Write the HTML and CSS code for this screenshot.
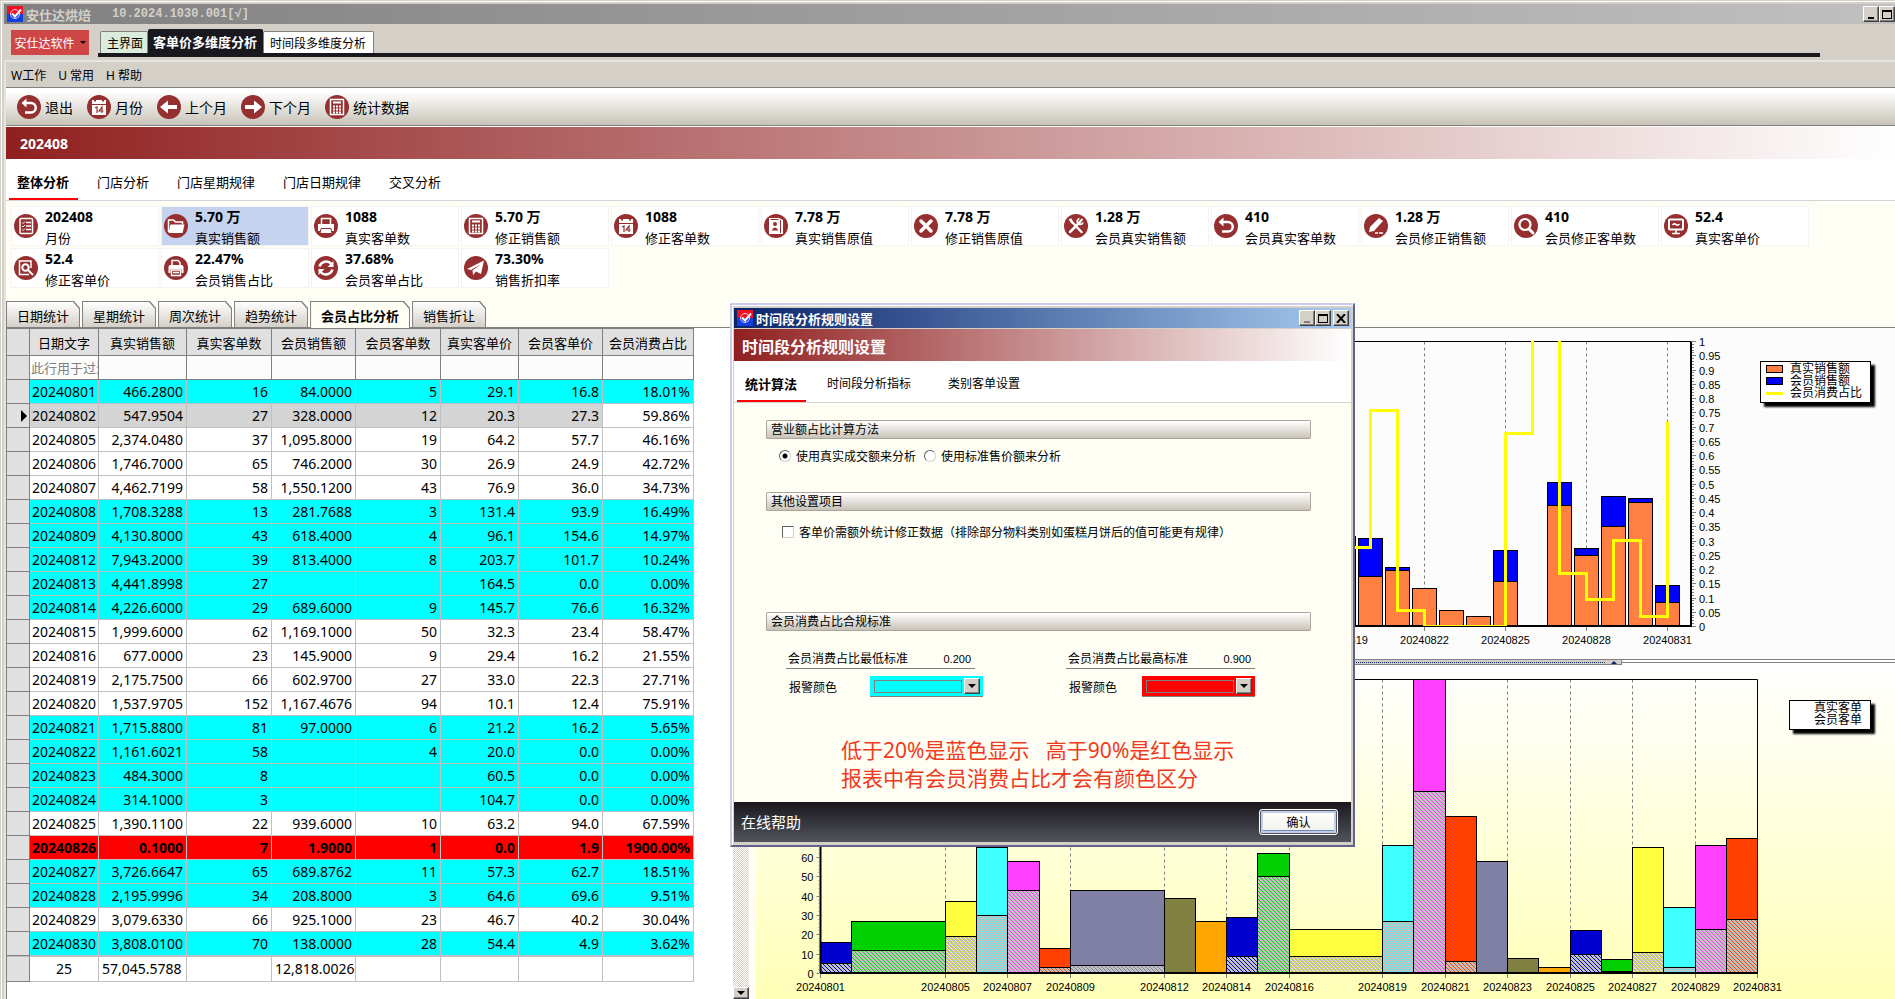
FILE: index.html
```html
<!DOCTYPE html>
<html lang="zh-CN">

<head>
    <meta charset="UTF-8">
    <meta name="viewport" content="width=device-width, initial-scale=1.0">
    <title>安仕达烘焙</title>
    <link rel="stylesheet" href="styles.css">
</head>

<body>
    <!-- icon set -->
    <svg class="defs" width="0" height="0" aria-hidden="true">
        <symbol id="i-logo" viewBox="0 0 16 16">
            <rect width="16" height="8" fill="#f01020" />
            <rect y="8" width="16" height="8" fill="#1040e0" />
            <path d="M0 9 Q4 6 8 9 T16 8 V11 H0z" fill="#1040e0" />
            <circle cx="8" cy="8" r="4.5" fill="none" stroke="#e8c8e8" />
            <path d="M5 7.500l3 3 6-7" fill="none" stroke="#fff" stroke-width="2" />
        </symbol>
        <symbol id="i-undo" viewBox="0 0 24 24">
            <path d="M8 8h6a4.500 4.500 0 0 1 0 9.500H8" fill="none" stroke="#fff" stroke-width="2.500" />
            <path d="M4.500 8l5-4.500v9z" fill="#fff" />
        </symbol>
        <symbol id="i-calendar" viewBox="0 0 24 24">
            <path d="M5 5h14v4H5z M5 10h14v10H5z" fill="#fff" />
            <path d="M8 3.500v3M16 3.500v3" stroke="#962f30" stroke-width="2" />
            <path d="M8 13l2-1v6M15 18v-6l-3 4h4.500" fill="none" stroke="#962f30" stroke-width="1.200" />
        </symbol>
        <symbol id="i-left" viewBox="0 0 24 24">
            <path d="M3 12l8-6.500v4.500h9v4h-9v4.500z" fill="#fff" />
        </symbol>
        <symbol id="i-right" viewBox="0 0 24 24">
            <path d="M21 12l-8-6.500v4.500H4v4h9v4.500z" fill="#fff" />
        </symbol>
        <symbol id="i-calc" viewBox="0 0 24 24">
            <rect x="5.500" y="4.500" width="13" height="15" fill="none" stroke="#fff" stroke-width="1.500" />
            <path d="M8 7.500h8" stroke="#fff" stroke-width="2" />
            <path d="M8 11.500h8M8 14.500h8M8 17.500h8" stroke="#fff" stroke-width="2" stroke-dasharray="2 1" />
        </symbol>
        <symbol id="i-list" viewBox="0 0 24 24">
            <rect x="6" y="4.500" width="12.500" height="15" rx="1" fill="none" stroke="#fff" stroke-width="1.500" />
            <path d="M12 8.500h5M12 12h5M12 15.500h5" stroke="#fff" stroke-width="1.500" />
            <path d="M8 8.500l1 1 2-2M8 12l1 1 2-2M8 15.500l1 1 2-2" fill="none" stroke="#fff" />
        </symbol>
        <symbol id="i-folder" viewBox="0 0 24 24">
            <path d="M4.500 18V6h5l2 2h7v2.500" fill="none" stroke="#fff" stroke-width="1.500" />
            <path d="M6.500 10.500h14l-2 8.500h-14z" fill="#fff" />
        </symbol>
        <symbol id="i-print" viewBox="0 0 24 24">
            <path d="M7.500 10V4.500h9V10" fill="none" stroke="#fff" stroke-width="1.500" />
            <path d="M4 10h16v7H4z" fill="#fff" />
            <path d="M7 14.500h10l1 5H6z" fill="#fff" stroke="#962f30" />
        </symbol>
        <symbol id="i-contact" viewBox="0 0 24 24">
            <path d="M5 4h10l4 2v14H5z" fill="#fff" />
            <path d="M16.500 6v13M6.500 5.500h8" stroke="#962f30" />
            <circle cx="11" cy="10" r="2" fill="#962f30" />
            <path d="M7.500 16.500q3.500-6 7 0z" fill="#962f30" />
        </symbol>
        <symbol id="i-close" viewBox="0 0 24 24">
            <path d="M7 7l10 10M17 7L7 17" stroke="#fff" stroke-width="3.500" stroke-linecap="round" />
        </symbol>
        <symbol id="i-tools" viewBox="0 0 24 24">
            <path d="M7 7l10.500 11M6 18L16 8" stroke="#fff" stroke-width="2.500" stroke-linecap="round" />
            <path d="M4.500 5l3-.500 2 4-2 1z" fill="#fff" />
            <path d="M18.500 5l-3 3M19 8.500a3 3 0 1 1-3.500-4" fill="none" stroke="#fff" stroke-width="1.800" />
        </symbol>
        <symbol id="i-pencil" viewBox="0 0 24 24">
            <path d="M5 18l1-5 9-9 4 3-9 10z" fill="#fff" />
            <path d="M11 19h3M15 19h4" stroke="#fff" stroke-width="1.500" />
        </symbol>
        <symbol id="i-search" viewBox="0 0 24 24">
            <circle cx="11" cy="10.500" r="5.500" fill="none" stroke="#fff" stroke-width="2.200" />
            <path d="M15 15l4 4" stroke="#fff" stroke-width="3" stroke-linecap="round" />
        </symbol>
        <symbol id="i-monitor" viewBox="0 0 24 24">
            <rect x="5" y="5.500" width="14" height="10" rx="1" fill="none" stroke="#fff" stroke-width="2" />
            <path d="M8.500 11q2-2 3.500-.500t3.500-.500M12 16v3M8 19.500h8" fill="none" stroke="#fff" stroke-width="1.600" />
        </symbol>
        <symbol id="i-docsearch" viewBox="0 0 24 24">
            <path d="M17 12V5H5.500v13.500H15" fill="none" stroke="#fff" stroke-width="1.500" />
            <circle cx="11.500" cy="11.500" r="3.200" fill="none" stroke="#fff" stroke-width="2" />
            <path d="M14 14l5 5" stroke="#fff" stroke-width="2" />
        </symbol>
        <symbol id="i-print2" viewBox="0 0 24 24">
            <path d="M8 9V4.500h6l2 2V9" fill="none" stroke="#fff" stroke-width="1.500" />
            <path d="M4.500 17V11q0-2 2-2h11q2 0 2 2v6h-2v-4h-11v4z" fill="#fff" />
            <path d="M7.500 14h9v5.500h-9zM9 16.500h6" fill="none" stroke="#fff" stroke-width="1.400" />
        </symbol>
        <symbol id="i-refresh" viewBox="0 0 24 24">
            <path d="M5.500 10.500a7 7 0 0 1 12-2.500M18.500 13.500a7 7 0 0 1-12 2.500" fill="none" stroke="#fff" stroke-width="2.500" />
            <path d="M19.500 5v6h-6zM4.500 19v-6h6z" fill="#fff" />
        </symbol>
        <symbol id="i-plane" viewBox="0 0 24 24">
            <path d="M3 13L20 4.500 17 18l-5-2.500-3 3.500-.500-4.500L17 8 7 14z" fill="#fff" />
        </symbol>
    </svg>

    <div class="app">
        <header class="titlebar">
            <svg class="logo"><use href="#i-logo" /></svg>
            <span class="app-name">安仕达烘焙</span>
            <span class="version">10.2024.1030.001[√]</span>
            <button class="win-btn" aria-label="最小化"><i class="min"></i></button>
            <button class="win-btn" aria-label="最大化"><i class="max"></i></button>
        </header>

        <div class="strip">
            <button class="brand">安仕达软件<i></i></button>
            <nav class="doc-tabs">
                <button class="doc-tab home">主界面</button>
                <button class="doc-tab active">客单价多维度分析</button>
                <button class="doc-tab">时间段多维度分析</button>
            </nav>
        </div>

        <div class="client">
            <nav class="menu">
                <button>W工作</button>
                <button>U 常用</button>
                <button>H 帮助</button>
            </nav>
            <div class="toolbar">
                <button><svg class="icon"><use href="#i-undo" /></svg>退出</button>
                <button><svg class="icon"><use href="#i-calendar" /></svg>月份</button>
                <button><svg class="icon"><use href="#i-left" /></svg>上个月</button>
                <button><svg class="icon"><use href="#i-right" /></svg>下个月</button>
                <button><svg class="icon"><use href="#i-calc" /></svg>统计数据</button>
            </div>
            <h1 class="band">202408</h1>
            <nav class="sections">
                <button class="active">整体分析</button>
                <button>门店分析</button>
                <button>门店星期规律</button>
                <button>门店日期规律</button>
                <button>交叉分析</button>
            </nav>

            <div class="cards">
                <div class="card"><svg class="icon"><use href="#i-list" /></svg><b>202408</b><span>月份</span></div>
                <div class="card selected"><svg class="icon"><use href="#i-folder" /></svg><b>5.70 万</b><span>真实销售额</span></div>
                <div class="card"><svg class="icon"><use href="#i-print" /></svg><b>1088</b><span>真实客单数</span></div>
                <div class="card"><svg class="icon"><use href="#i-calc" /></svg><b>5.70 万</b><span>修正销售额</span></div>
                <div class="card"><svg class="icon"><use href="#i-calendar" /></svg><b>1088</b><span>修正客单数</span></div>
                <div class="card"><svg class="icon"><use href="#i-contact" /></svg><b>7.78 万</b><span>真实销售原值</span></div>
                <div class="card"><svg class="icon"><use href="#i-close" /></svg><b>7.78 万</b><span>修正销售原值</span></div>
                <div class="card"><svg class="icon"><use href="#i-tools" /></svg><b>1.28 万</b><span>会员真实销售额</span></div>
                <div class="card"><svg class="icon"><use href="#i-undo" /></svg><b>410</b><span>会员真实客单数</span></div>
                <div class="card"><svg class="icon"><use href="#i-pencil" /></svg><b>1.28 万</b><span>会员修正销售额</span></div>
                <div class="card"><svg class="icon"><use href="#i-search" /></svg><b>410</b><span>会员修正客单数</span></div>
                <div class="card"><svg class="icon"><use href="#i-monitor" /></svg><b>52.4</b><span>真实客单价</span></div>
                <div class="card"><svg class="icon"><use href="#i-docsearch" /></svg><b>52.4</b><span>修正客单价</span></div>
                <div class="card"><svg class="icon"><use href="#i-print2" /></svg><b>22.47%</b><span>会员销售占比</span></div>
                <div class="card"><svg class="icon"><use href="#i-refresh" /></svg><b>37.68%</b><span>会员客单占比</span></div>
                <div class="card"><svg class="icon"><use href="#i-plane" /></svg><b>73.30%</b><span>销售折扣率</span></div>
            </div>

            <nav class="sheet-tabs">
                <button>日期统计</button>
                <button>星期统计</button>
                <button>周次统计</button>
                <button>趋势统计</button>
                <button class="active">会员占比分析</button>
                <button>销售折让</button>
            </nav>

            <main class="workspace">
                <div class="grid-pane">
                    <table class="grid">
                        <colgroup>
                            <col class="c-mark"><col class="c-date"><col class="c-sales"><col class="c-count"><col class="c-msales"><col class="c-mcount"><col class="c-price"><col class="c-mprice"><col class="c-share">
                        </colgroup>
                        <thead>
                            <tr>
                                <th></th>
                                <th>日期文字</th>
                                <th>真实销售额</th>
                                <th>真实客单数</th>
                                <th>会员销售额</th>
                                <th>会员客单数</th>
                                <th>真实客单价</th>
                                <th>会员客单价</th>
                                <th>会员消费占比</th>
                            </tr>
                            <tr class="filter">
                                <th></th>
                                <td><input type="text" placeholder="此行用于过滤" aria-label="过滤"></td>
                                <td></td><td></td><td></td><td></td><td></td><td></td><td></td>
                            </tr>
                        </thead>
                        <tbody id="rows"></tbody>
                        <tfoot>
                            <tr>
                                <th></th>
                                <td>25</td>
                                <td>57,045.5788</td>
                                <td></td>
                                <td>12,818.0026</td>
                                <td></td><td></td><td></td><td></td>
                            </tr>
                        </tfoot>
                    </table>
                </div>
                <div class="scrollbar"><button class="win-btn" aria-label="向下滚动"><i class="down"></i></button></div>
                <div class="charts">
                    <section class="chart chart-sales">
                        <svg id="salesChart"></svg>
                        <ul class="legend">
                            <li><i class="key orange"></i>真实销售额</li>
                            <li><i class="key blue"></i>会员销售额</li>
                            <li><i class="key line"></i>会员消费占比</li>
                        </ul>
                    </section>
                    <div class="splitter"><div class="handle"><i></i></div></div>
                    <section class="chart chart-count">
                        <svg id="countChart"></svg>
                        <ul class="legend">
                            <li><i class="key"></i>真实客单</li>
                            <li><i class="key"></i>会员客单</li>
                        </ul>
                    </section>
                </div>
            </main>
        </div>
    </div>

    <div class="dialog" role="dialog" aria-labelledby="dialogTitle">
        <div class="dialog-title">
            <svg class="logo"><use href="#i-logo" /></svg>
            <span id="dialogTitle">时间段分析规则设置</span>
            <button class="win-btn" aria-label="最小化"><i class="min off"></i></button>
            <button class="win-btn" aria-label="最大化"><i class="max"></i></button>
            <button class="win-btn close" aria-label="关闭"><svg width="10" height="9" viewBox="0 0 10 9"><path d="M1 0l8 9M9 0L1 9" stroke="#000" stroke-width="2" /></svg></button>
        </div>
        <h2 class="band">时间段分析规则设置</h2>
        <nav class="sections">
            <button class="active">统计算法</button>
            <button>时间段分析指标</button>
            <button>类别客单设置</button>
        </nav>
        <form class="dialog-body">
            <h3>营业额占比计算方法</h3>
            <div class="choices">
                <label><input type="radio" name="method" checked>使用真实成交额来分析</label>
                <label><input type="radio" name="method">使用标准售价额来分析</label>
            </div>
            <h3 class="group-other">其他设置项目</h3>
            <div class="choices check">
                <label><input type="checkbox">客单价需额外统计修正数据（排除部分物料类别如蛋糕月饼后的值可能更有规律）</label>
            </div>
            <h3 class="group-limit">会员消费占比合规标准</h3>
            <div class="limits">
                <div class="limit low">
                    <div class="field"><label for="low">会员消费占比最低标准</label><input type="text" id="low" value="0.200"></div>
                    <div class="color-row"><label for="lowColor">报警颜色</label>
                        <div class="color-box cyan"><select id="lowColor"><option></option></select><span class="win-btn"><i class="down"></i></span></div>
                    </div>
                </div>
                <div class="limit">
                    <div class="field"><label for="high">会员消费占比最高标准</label><input type="text" id="high" value="0.900"></div>
                    <div class="color-row"><label for="highColor">报警颜色</label>
                        <div class="color-box red"><select id="highColor"><option></option></select><span class="win-btn"><i class="down"></i></span></div>
                    </div>
                </div>
            </div>
            <p class="hint">低于20%是蓝色显示&nbsp;&nbsp; 高于90%是红色显示<br>报表中有会员消费占比才会有颜色区分</p>
        </form>
        <div class="dialog-foot">
            <a href="#">在线帮助</a>
            <button class="ok">确认</button>
        </div>
    </div>

    <script src="script.js"></script>
</body>

</html>
```

FILE: styles.css
```css
* {
    box-sizing: border-box;
}

body {
    margin: 0;
    background: #d4d0c8;
    font-family: "Noto Sans", "Noto Sans CJK SC", sans-serif;
    font-size: 12px;
    color: #000;
    overflow: hidden;
}

button,
input,
select {
    font: inherit;
    color: inherit;
}

button {
    padding: 0;
    border: 0;
    background: none;
    white-space: nowrap;
}

.defs {
    position: absolute;
}

.app {
    display: flex;
    flex-direction: column;
    height: 100vh;
    padding: 4px 0 0 4px;
    box-shadow: inset 1px 1px #d4d0c8, inset 2px 2px #fff;
}

/* title bars */
.titlebar {
    display: flex;
    align-items: center;
    flex: none;
    height: 20px;
    padding-left: 3px;
    background: linear-gradient(90deg, #808080, #c0c0c0);
    color: #d4d0c8;
    font-weight: bold;
}

.app-name {
    font-size: 13px;
}

.logo {
    width: 16px;
    height: 16px;
    margin-right: 3px;
}

.version {
    flex: 1;
    margin-left: 21px;
    font-family: "Liberation Mono", monospace;
}

.win-btn {
    display: flex;
    justify-content: center;
    align-items: center;
    flex: none;
    width: 16px;
    height: 16px;
    background: #d4d0c8;
    border: 1px solid;
    border-color: #fff #404040 #404040 #fff;
    box-shadow: inset -1px -1px #808080;
}

.min {
    width: 6px;
    height: 2px;
    margin-top: 7px;
    background: #000;
}

.min.off {
    background: #808080;
}

.max {
    width: 10px;
    height: 9px;
    border: 1px solid #000;
    border-top-width: 2px;
}

.down {
    border: 4px solid transparent;
    border-top-color: #000;
    border-bottom: 0;
}

/* document tabs */
.strip {
    display: flex;
    align-items: flex-start;
    flex: none;
    height: 36px;
    padding: 0 75px 0 7px;
}

.brand {
    display: flex;
    align-items: center;
    justify-content: center;
    gap: 5px;
    width: 78px;
    height: 25px;
    margin-top: 6px;
    background: #cf4647;
    color: #fff;
}

.brand i {
    border: 3px solid transparent;
    border-top-color: #000;
    border-bottom: 0;
}

.doc-tabs {
    display: flex;
    align-items: flex-end;
    flex: 1;
    height: 33px;
    margin-left: 9px;
    padding-left: 2px;
    border-bottom: 4px solid #1a181f;
}

.doc-tab {
    height: 22px;
    padding: 0 7px 0 6px;
    background: #fff;
    border: 1px solid #808080;
    border-bottom: 0;
    border-radius: 2px 2px 0 0;
}

.doc-tab.home {
    padding: 0 4px 0 6px;
    background: #dcecdc;
}

.doc-tab.active {
    height: 24px;
    padding: 0 5px 0 4px;
    background: #1a181f;
    border-color: #1a181f;
    color: #fff;
    font-size: 13px;
    font-weight: bold;
}

.client {
    display: flex;
    flex-direction: column;
    flex: 1;
    min-height: 0;
    border: 2px solid #e4e4e2;
    border-width: 2px 0 0 2px;
    background: #fefef4;
}

.menu {
    display: flex;
    align-items: center;
    gap: 12px;
    flex: none;
    height: 25px;
    padding-left: 5px;
    background: #d4d0c8;
}

.toolbar {
    display: flex;
    align-items: center;
    gap: 14px;
    flex: none;
    height: 39px;
    padding-left: 11px;
    border: 1px solid #808080;
    border-width: 1px 0;
    background: linear-gradient(#fff 10%, #c8c3b8);
}

.toolbar button {
    display: flex;
    align-items: center;
    gap: 4px;
    font-size: 14px;
}

.icon {
    width: 24px;
    height: 24px;
    background: #962f30;
    border-radius: 50%;
}

.band {
    flex: none;
    height: 32px;
    margin: 1px 0 0;
    padding-left: 14px;
    background: linear-gradient(90deg, #902020, #fff);
    color: #fff;
    font-size: 14px;
    line-height: 34px;
}

.sections {
    display: flex;
    gap: 11px;
    flex: none;
    height: 42px;
    padding-left: 3px;
    background: #fff;
    border-bottom: 1px solid #d4d4d8;
}

.sections button {
    padding: 5px 9px 0 8px;
    border-bottom: 2px solid transparent;
    font-size: 13px;
}

.sections .active {
    border-color: #f00;
    font-weight: bold;
}

/* figures */
.cards {
    display: flex;
    flex-wrap: wrap;
    gap: 2px;
    flex: none;
    padding: 5px 5px 0;
}

.card {
    display: grid;
    grid-template: 20px 18px / 31px 1fr;
    align-items: center;
    width: 148px;
    height: 40px;
    padding-left: 2px;
    background: #fff;
    border: 1px solid #f4f4f6;
    overflow: hidden;
}

.card.selected {
    background: #c6d3ef;
}

.card .icon {
    grid-row: span 2;
}

.card b {
    font-size: 14px;
    line-height: 20px;
}

.card span {
    padding-top: 2px;
    font-size: 13px;
    line-height: 18px;
    align-self: start;
    white-space: nowrap;
}

/* sheet tabs with a cut corner */
.sheet-tabs {
    display: flex;
    gap: 2px;
    flex: none;
    margin-top: 13px;
}

.sheet-tabs button {
    position: relative;
    isolation: isolate;
    height: 26px;
    padding: 2px 11px 0;
    background: #808080;
    clip-path: polygon(0 0, calc(100% - 6px) 0, 100% 7px, 100% 100%, 0 100%);
    font-size: 13px;
}

.sheet-tabs button::before {
    content: "";
    position: absolute;
    z-index: -1;
    inset: 1px 1px 0;
    background: linear-gradient(#fff, #d4d0c8);
    clip-path: polygon(0 0, calc(100% - 6px) 0, 100% 7px, 100% 100%, 0 100%);
}

.sheet-tabs .active {
    height: 27px;
    margin-bottom: -1px;
    font-weight: bold;
}

.sheet-tabs .active::before {
    background: #fefef4;
}

.workspace {
    display: flex;
    flex: 1;
    min-height: 0;
    border-top: 1px solid #808080;
}

.grid-pane {
    flex: none;
    width: 727px;
    background: #fff;
    border-left: 1px solid #808080;
    overflow: hidden;
}

/* data grid */
.grid {
    width: 687px;
    table-layout: fixed;
    border-spacing: 0;
    font-size: 14px;
}

.c-mark {
    width: 23px;
}

.c-date {
    width: 69px;
}

.c-sales {
    width: 88px;
}

.c-count,
.c-mcount {
    width: 85px;
}

.c-msales,
.c-mprice {
    width: 84px;
}

.c-price {
    width: 78px;
}

.c-share {
    width: 91px;
}

.grid th,
.grid td {
    height: 24px;
    padding: 0 3px;
    border: 1px solid #c0c0c0;
    border-width: 0 1px 1px 0;
    line-height: 20px;
    text-align: right;
    white-space: nowrap;
    overflow: hidden;
}

.grid th {
    padding: 0;
    background: #e0e0e0;
    border-color: #808080;
    font-size: 13px;
    font-weight: normal;
    text-align: center;
}

.grid thead tr:first-child th {
    height: 28px;
    padding-top: 2px;
    border-top: 1px solid #808080;
}

.grid td:nth-child(2) {
    padding: 0 2px;
    text-align: center;
}

.grid .filter td {
    padding: 0;
    background: #fcfcfc;
    border-color: #808080;
}

.filter input {
    display: block;
    width: 100%;
    padding: 0 0 0 1px;
    border: 0;
    background: none;
    font-size: 13px;
}

.filter input::placeholder {
    color: #808080;
}

.grid .low td {
    background: #0ff;
}

.grid .high td {
    background: #f00;
    font-weight: bold;
}

.grid .current td {
    background: #d4d4d4;
}

.grid .current td:last-child {
    background: #fff;
}

.current th::after {
    content: "";
    display: block;
    width: 0;
    margin-left: 14px;
    border: 6px solid transparent;
    border-left-color: #000;
    border-right: 0;
}

.grid tfoot th,
.grid tfoot td {
    height: 26px;
    border-top: 1px solid #c0c0c0;
}

.grid tfoot td:nth-child(3) {
    padding-right: 6px;
}

.scrollbar {
    display: flex;
    align-items: flex-end;
    flex: none;
    width: 16px;
    margin-right: 7px;
    background: repeating-conic-gradient(#fff 0 25%, #d4d0c8 0 50%) 0 0 / 2px 2px;
}

.scrollbar .win-btn {
    height: 12px;
}

/* charts */
.charts {
    display: flex;
    flex-direction: column;
    flex: 1;
    min-width: 0;
}

.chart {
    position: relative;
}

.chart svg {
    display: block;
    width: 100%;
    height: 100%;
    font-family: "Liberation Sans", sans-serif;
    font-size: 11px;
}

.chart-sales {
    height: 331px;
    background: #fcfcfc;
}

.chart-count {
    flex: 1;
    min-height: 0;
    background: linear-gradient(#fff, #ffffb8);
}

.legend {
    position: absolute;
    top: 33px;
    right: 24px;
    margin: 0;
    padding: 1px 8px 1px 5px;
    background: #fff;
    border: 1px solid #000;
    box-shadow: 4px 4px 2px #000;
    list-style: none;
}

.legend li {
    display: flex;
    align-items: center;
    gap: 7px;
    height: 12px;
    line-height: 12px;
}

.chart-sales .legend {
    padding-bottom: 3px;
}

.chart-count .legend {
    top: 35px;
    padding-bottom: 3px;
}

.chart-count .key {
    width: 12px;
}

.key {
    width: 17px;
    height: 8px;
}

.key.orange {
    background: #ff8040;
    border: 1px solid #000;
}

.key.blue {
    background: #00f;
    border: 1px solid #000;
}

.key.line {
    height: 3px;
    background: #ff0;
}

.splitter {
    display: flex;
    justify-content: center;
    flex: none;
    height: 6px;
    border-top: 1px solid #808080;
    background: linear-gradient(#fff 2px, #808080 2px 3px, #fff 3px);
}

.handle {
    display: flex;
    align-items: center;
    justify-content: flex-end;
    width: 52%;
    padding: 0 4px;
    background: #d4d0c8;
    border: 1px solid #808080;
    border-top: 0;
}

.handle::before {
    content: "";
    flex: 1;
    margin-right: 6px;
    border-top: 1px dotted #0a246a;
}

.handle i {
    border: 3px solid transparent;
    border-top: 0;
    border-bottom-color: #0a246a;
}

/* settings dialog */
.dialog {
    position: absolute;
    top: 303px;
    left: 730px;
    width: 625px;
    padding: 3px 2px;
    background: #d4d0c8;
    border: 2px solid;
    border-color: #ccccea #62628a #62628a #ccccea;
    box-shadow: inset 1px 1px #fff;
}

.dialog-title {
    display: flex;
    align-items: center;
    height: 20px;
    padding: 0 2px 0 3px;
    background: linear-gradient(90deg, #0a246a, #a6caf0);
    color: #fff;
    font-size: 13px;
    font-weight: bold;
}

.dialog-title span {
    flex: 1;
}

.dialog-title .close {
    margin-left: 2px;
}

.dialog .band {
    padding-left: 8px;
    font-size: 16px;
    line-height: 36px;
}

.dialog .sections {
    gap: 20px;
}

.dialog .sections button {
    font-size: 12px;
}

.dialog .sections .active {
    margin-right: -7px;
    font-size: 13px;
}

.dialog-body {
    height: 399px;
    padding: 17px 40px 0 32px;
    background: #fefef4;
}

.dialog h3 {
    height: 19px;
    margin: 0;
    padding-left: 4px;
    background: linear-gradient(#fff, #c8c3b8);
    border: 1px solid #aca698;
    border-radius: 1px;
    font-size: 12px;
    font-weight: normal;
    line-height: 18px;
}

.choices {
    display: flex;
    gap: 8px;
    height: 18px;
    margin-top: 8px;
    padding-left: 13px;
}

.choices label {
    display: flex;
    align-items: center;
    gap: 5px;
    white-space: nowrap;
}

.choices input {
    appearance: none;
    width: 12px;
    height: 12px;
    margin: 0;
    background: #fff;
    border: 1px solid;
    border-color: #606060 #d4d0c8 #d4d0c8 #606060;
}

.choices input[type="radio"] {
    border-radius: 50%;
}

.choices input:checked {
    background: radial-gradient(circle, #000 2px, #fff 3px);
}

.choices.check {
    margin-top: 12px;
    padding-left: 16px;
}

.dialog .group-other {
    margin-top: 27px;
}

.dialog .group-limit {
    margin-top: 71px;
}

.limits {
    display: flex;
    justify-content: space-between;
    margin-top: 18px;
    padding: 0 56px 0 20px;
}

.limit {
    width: 189px;
}

.limit.low {
    width: 197px;
}

.field {
    display: flex;
    justify-content: space-between;
    width: 189px;
    height: 20px;
    padding: 0 4px 0 2px;
    border-bottom: 1px solid #808080;
    line-height: 20px;
}

.field input {
    width: 50px;
    padding: 0;
    border: 0;
    background: none;
    font-family: "Liberation Sans", sans-serif;
    font-size: 11px;
    text-align: right;
}

.color-row {
    display: flex;
    justify-content: space-between;
    align-items: center;
    margin-top: 7px;
    padding-left: 3px;
}

.color-box {
    display: flex;
    align-items: center;
    gap: 2px;
    width: 113px;
    height: 21px;
    padding: 0 3px 0 4px;
    border-bottom: 1px solid #808080;
}

.color-box.cyan {
    background: #0ff;
}

.color-box.red {
    background: #f00;
}

.color-box select {
    appearance: none;
    flex: 1;
    height: 13px;
    border: 1px solid #808080;
    border-radius: 0;
    background: none;
}

.hint {
    margin: 39px 0 0;
    padding-left: 75px;
    color: #f03a20;
    font-size: 21px;
    line-height: 28px;
    white-space: nowrap;
}

.dialog-foot {
    display: flex;
    align-items: center;
    justify-content: space-between;
    height: 40px;
    padding: 0 13px 0 7px;
    background: linear-gradient(#1a181d, #51545c);
}

.dialog-foot a {
    color: #fff;
    font-size: 15px;
    line-height: 20px;
    text-decoration: none;
}

.ok {
    width: 79px;
    height: 26px;
    background: linear-gradient(#fff, #f0f0ea);
    border: 1px solid #fff;
    border-radius: 3px;
    box-shadow: inset 0 0 0 1px #50545c, inset 0 0 0 3px #c0cce8, inset 0 -4px #7088b8;
}
```

FILE: script.js
```js
// date, sales, orders, member sales, member orders, avg, member avg, member share %
var days = [
    ['20240801', '466.2800', 16, '84.0000', 5, '29.1', '16.8', '18.01'],
    ['20240802', '547.9504', 27, '328.0000', 12, '20.3', '27.3', '59.86'],
    ['20240805', '2,374.0480', 37, '1,095.8000', 19, '64.2', '57.7', '46.16'],
    ['20240806', '1,746.7000', 65, '746.2000', 30, '26.9', '24.9', '42.72'],
    ['20240807', '4,462.7199', 58, '1,550.1200', 43, '76.9', '36.0', '34.73'],
    ['20240808', '1,708.3288', 13, '281.7688', 3, '131.4', '93.9', '16.49'],
    ['20240809', '4,130.8000', 43, '618.4000', 4, '96.1', '154.6', '14.97'],
    ['20240812', '7,943.2000', 39, '813.4000', 8, '203.7', '101.7', '10.24'],
    ['20240813', '4,441.8998', 27, '', '', '164.5', '0.0', '0.00'],
    ['20240814', '4,226.6000', 29, '689.6000', 9, '145.7', '76.6', '16.32'],
    ['20240815', '1,999.6000', 62, '1,169.1000', 50, '32.3', '23.4', '58.47'],
    ['20240816', '677.0000', 23, '145.9000', 9, '29.4', '16.2', '21.55'],
    ['20240819', '2,175.7500', 66, '602.9700', 27, '33.0', '22.3', '27.71'],
    ['20240820', '1,537.9705', 152, '1,167.4676', 94, '10.1', '12.4', '75.91'],
    ['20240821', '1,715.8800', 81, '97.0000', 6, '21.2', '16.2', '5.65'],
    ['20240822', '1,161.6021', 58, '', 4, '20.0', '0.0', '0.00'],
    ['20240823', '484.3000', 8, '', '', '60.5', '0.0', '0.00'],
    ['20240824', '314.1000', 3, '', '', '104.7', '0.0', '0.00'],
    ['20240825', '1,390.1100', 22, '939.6000', 10, '63.2', '94.0', '67.59'],
    ['20240826', '0.1000', 7, '1.9000', 1, '0.0', '1.9', '1900.00'],
    ['20240827', '3,726.6647', 65, '689.8762', 11, '57.3', '62.7', '18.51'],
    ['20240828', '2,195.9996', 34, '208.8000', 3, '64.6', '69.6', '9.51'],
    ['20240829', '3,079.6330', 66, '925.1000', 23, '46.7', '40.2', '30.04'],
    ['20240830', '3,808.0100', 70, '138.0000', 28, '54.4', '4.9', '3.62']
];

function rowClass(d) {
    if (d[0] === '20240802') return 'current';
    if (+d[7] < 20) return 'low';
    if (+d[7] > 90) return 'high';
    return '';
}

document.getElementById('rows').innerHTML = days.map(function (d) {
    return '<tr class="' + rowClass(d) + '"><th></th>' + d.map(function (v, i) {
        return '<td>' + v + (i === 7 ? '%' : '') + '</td>';
    }).join('') + '</tr>';
}).join('');

function num(s) {
    return +String(s).replace(/,/g, '');
}

function dayOf(d) {
    return +d[0].slice(6);
}

function pad(n) {
    return (n < 10 ? '0' : '') + n;
}

function line(x1, y1, x2, y2, color, width, dash) {
    return '<path d="M' + x1 + ' ' + y1 + 'L' + x2 + ' ' + y2 + '" stroke="' + color + '" stroke-width="' + (width || 1) + '"' +
        (dash ? ' stroke-dasharray="' + dash + '"' : '') + '/>';
}

function rect(x, y, w, h, fill) {
    return '<rect x="' + x + '" y="' + y + '" width="' + w + '" height="' + h + '" fill="' + fill + '" stroke="#000"/>';
}

function text(x, y, s, anchor) {
    return '<text x="' + x + '" y="' + y + '" text-anchor="' + anchor + '">' + s + '</text>';
}

function drawSales() {
    var svg = document.getElementById('salesChart');
    var w = svg.clientWidth;
    var top = 13.5, bottom = 298, right = w - 204, left = 76;
    var step = (w - 228 - 100) / 30;
    var scale = 285 / 8756.6;
    var x = function (day) { return Math.round(100 + (day - 1) * step) + 0.5; };
    var y = function (v) { return Math.round(bottom - v) + 0.5; };
    var all = days.concat([['20240831', '738', 0, '523', 0, '', '', '72']]);
    var out = '';

    [1, 4, 7, 10, 13, 16, 19, 22, 25, 28, 31].forEach(function (day) {
        out += line(x(day), top, x(day), bottom, '#808080', 1, '3 3');
        out += line(x(day), bottom, x(day), bottom + 5, '#808080');
        out += text(x(day), bottom + 18, '202408' + pad(day), 'middle');
    });
    all.forEach(function (d) {
        var sales = num(d[1]) * scale, member = num(d[3]) * scale;
        if (sales < 1) return;
        out += rect(x(dayOf(d)) - 12, y(sales), 24, bottom - y(sales), '#ff8040');
        if (member) out += rect(x(dayOf(d)) - 12, y(sales + member), 24, y(sales) - y(sales + member), '#00f');
    });

    out += line(left, top, right, top, '#000');
    out += line(left, bottom, right + 1, bottom, '#000', 2);
    out += line(right, top, right, bottom, '#000', 2);

    // share of member spend, drawn as steps
    var path = '';
    all.forEach(function (d, i) {
        var v = y(Math.min(+d[7] / 100, 2) * 285);
        path += i ? 'H' + x(dayOf(d)) + 'V' + v : 'M' + x(dayOf(d)) + ' ' + v;
    });
    out += '<clipPath id="plot"><rect x="' + left + '" y="13" width="' + (right - left) + '" height="285"/></clipPath>';
    out += '<path d="' + path + '" fill="none" stroke="#ff0" stroke-width="3" clip-path="url(#plot)"/>';
    for (var i = 0; i <= 100; i++) {
        out += line(right + 1, y(i * 2.85), right + (i % 5 ? 3 : 5), y(i * 2.85), '#808080');
        if (i % 5 === 0) out += text(right + 8, y(i * 2.85) + 4, i / 100, 'start');
    }
    svg.innerHTML = out;
}

function drawCount() {
    var svg = document.getElementById('countChart');
    var colors = ['#0000d0', '#00d000', '#ffff40', '#40ffff', '#ff40ff', '#ff4000', '#8080a4', '#808040', '#ffa500'];
    var w = svg.clientWidth;
    var top = 14.5, bottom = 308, left = 64.5, right = w - 137.5;
    var step = (right - left) / 30;
    var scale = 294 / 152;
    var x = function (day) { return Math.round((day - 1) * step) + left; };
    var y = function (v) { return Math.round(bottom - v * scale) + 0.5; };
    var out = '<defs>';

    colors.forEach(function (c, i) {
        out += '<pattern id="hatch' + i + '" width="4" height="4" patternUnits="userSpaceOnUse"><rect width="4" height="4" fill="#c0c0c0"/>' +
            '<path d="M-1 -1L5 5M-1 3L1 5M3 -1L5 1" stroke="' + c + '"/></pattern>';
    });
    out += '</defs>';

    [1, 5, 7, 9, 12, 14, 16, 19, 21, 23, 25, 27, 29, 31].forEach(function (day) {
        if (day > 1 && day < 31) out += line(x(day), top, x(day), bottom, '#808080', 1, '3 3');
        out += line(x(day), bottom, x(day), bottom + 5, '#808080');
        out += text(x(day), bottom + 18, '202408' + pad(day), 'middle');
    });
    days.forEach(function (d, i) {
        var from = x(dayOf(d));
        var to = x(days[i + 1] ? dayOf(days[i + 1]) : 31);
        out += rect(from, y(d[2]), to - from, bottom - y(d[2]), colors[i % 9]);
        if (d[4] && i !== 7 && i !== 15) out += rect(from, y(d[4]), to - from, bottom - y(d[4]), 'url(#hatch' + i % 9 + ')');
    });
    out += line(left, top, right, top, '#000');
    out += line(right, top, right, bottom, '#000');
    out += line(left, top, left, bottom, '#000', 2);
    out += line(left, bottom, right, bottom, '#000', 2);
    for (var v = 0; v <= 150; v += 2) {
        out += line(left - (v % 10 ? 2 : 4), y(v), left - 1, y(v), '#808080');
        if (v % 10 === 0) out += text(left - 7, y(v) + 4, v, 'end');
    }
    svg.innerHTML = out;
}

function draw() {
    drawSales();
    drawCount();
}

draw();
window.addEventListener('resize', draw);
```
